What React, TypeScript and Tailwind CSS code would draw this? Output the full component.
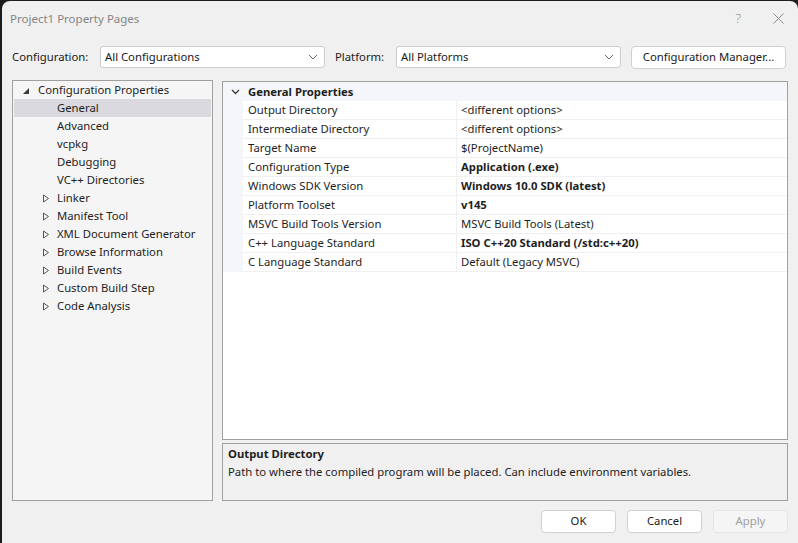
import React from 'react';

const font = { fontFamily: '"Noto Sans", "Open Sans", sans-serif' };

interface TreeItem {
  label: string;
  level: 0 | 1;
  expander?: 'open' | 'closed';
  selected?: boolean;
}

const treeItems: TreeItem[] = [
  { label: 'Configuration Properties', level: 0, expander: 'open' },
  { label: 'General', level: 1, selected: true },
  { label: 'Advanced', level: 1 },
  { label: 'vcpkg', level: 1 },
  { label: 'Debugging', level: 1 },
  { label: 'VC++ Directories', level: 1 },
  { label: 'Linker', level: 1, expander: 'closed' },
  { label: 'Manifest Tool', level: 1, expander: 'closed' },
  { label: 'XML Document Generator', level: 1, expander: 'closed' },
  { label: 'Browse Information', level: 1, expander: 'closed' },
  { label: 'Build Events', level: 1, expander: 'closed' },
  { label: 'Custom Build Step', level: 1, expander: 'closed' },
  { label: 'Code Analysis', level: 1, expander: 'closed' }
];

const properties = [
  { name: 'Output Directory', value: '<different options>', bold: false },
  { name: 'Intermediate Directory', value: '<different options>', bold: false },
  { name: 'Target Name', value: '$(ProjectName)', bold: false },
  { name: 'Configuration Type', value: 'Application (.exe)', bold: true },
  { name: 'Windows SDK Version', value: 'Windows 10.0 SDK (latest)', bold: true },
  { name: 'Platform Toolset', value: 'v145', bold: true },
  { name: 'MSVC Build Tools Version', value: 'MSVC Build Tools (Latest)', bold: false },
  { name: 'C++ Language Standard', value: 'ISO C++20 Standard (/std:c++20)', bold: true },
  { name: 'C Language Standard', value: 'Default (Legacy MSVC)', bold: false }
];

const ComboChevron = () => (
  <svg width="10" height="6" viewBox="0 0 10 6" className="shrink-0">
    <path d="M1 1 L5 5 L9 1" fill="none" stroke="#6a6a6a" strokeWidth="1" />
  </svg>
);

const Combo: React.FC<{ value: string; width: string }> = ({ value, width }) => (
  <div
    className={`${width} h-[22px] bg-white border border-[#cccccc] rounded-[3px] flex items-center justify-between pl-[4px] pr-[6px] text-[#1a1a1a]`}
  >
    <span>{value}</span>
    <ComboChevron />
  </div>
);

const Expander: React.FC<{ kind: 'open' | 'closed' }> = ({ kind }) =>
  kind === 'open' ? (
    <svg width="8" height="8" viewBox="0 0 8 8">
      <path d="M7 1 L7 7 L1 7 Z" fill="#3c3c3c" />
    </svg>
  ) : (
    <svg width="8" height="9" viewBox="0 0 8 9">
      <path d="M1.5 1 L6.5 4.5 L1.5 8 Z" fill="none" stroke="#555555" strokeWidth="1" />
    </svg>
  );

const DialogButton: React.FC<{ label: string; disabled?: boolean }> = ({ label, disabled }) => (
  <div
    className={`w-[75px] h-[23px] rounded-[4px] border flex items-center justify-center ${
      disabled
        ? 'bg-[#f5f5f5] border-[#e5e5e5] text-[#a0a0a0]'
        : 'bg-white border-[#d0d0d0] text-[#1a1a1a]'
    }`}
  >
    {label}
  </div>
);

export default function App() {
  return (
    <div className="w-[798px] h-[543px] bg-[#1c1c1c] overflow-hidden pl-[2px] pt-[1px] text-[11.3px]" style={font}>
      <div className="h-full bg-[#f0f0f0] rounded-t-[8px] flex flex-col">
        {/* Title bar */}
        <div className="h-[35px] shrink-0 flex items-center pl-[8px] pr-[14px]">
          <span className="text-[11.5px] text-[#858585]">Project1 Property Pages</span>
          <div className="ml-auto flex items-center gap-[32px] text-[#8a8a8a]">
            <span className="text-[13px] font-light">?</span>
            <svg width="11" height="11" viewBox="0 0 11 11">
              <path d="M0.5 0.5 L10.5 10.5 M10.5 0.5 L0.5 10.5" stroke="#8a8a8a" strokeWidth="1" />
            </svg>
          </div>
        </div>

        {/* Configuration row */}
        <div className="mt-[10px] h-[22px] shrink-0 flex items-center pl-[10px] text-[#1a1a1a]">
          <span className="w-[88px]">Configuration:</span>
          <Combo value="All Configurations" width="w-[225px]" />
          <span className="ml-[10px] w-[61px]">Platform:</span>
          <Combo value="All Platforms" width="w-[225px]" />
          <div className="ml-[10px] w-[155px] h-[23px] bg-white border border-[#d0d0d0] rounded-[4px] flex items-center justify-center">
            Configuration Manager...
          </div>
        </div>

        {/* Main area */}
        <div className="mt-[12px] h-[421px] shrink-0 flex pl-[10px] gap-[9px]">
          {/* Tree */}
          <div className="w-[201px] h-full bg-[#f5f5f5] border border-[#a0a0a0] pl-[1px] pr-[1px] text-[#1e1e1e]">
            {treeItems.map((item) => (
              <div
                key={item.label}
                className={`h-[18px] flex items-center pt-[1px] ${item.selected ? 'bg-[#d9d9df]' : ''}`}
              >
                <div className={`${item.level === 0 ? 'w-[24px] pl-[8px]' : 'w-[43px] pl-[28px]'} flex items-center`}>
                  {item.expander && <Expander kind={item.expander} />}
                </div>
                <span>{item.label}</span>
              </div>
            ))}
          </div>

          {/* Right column */}
          <div className="w-[566px] h-full flex flex-col">
            {/* Property grid */}
            <div className="mt-[1px] h-[359px] bg-white border border-[#a0a0a0] text-[#1e1e1e]">
              <div className="h-[19px] bg-[#f4f6f9] flex items-center pt-[1px]">
                <div className="w-[25px] flex items-center justify-center">
                  <svg width="9" height="6" viewBox="0 0 9 6">
                    <path d="M1 1 L4.5 4.5 L8 1" fill="none" stroke="#3a3a3a" strokeWidth="1.3" />
                  </svg>
                </div>
                <span className="font-bold">General Properties</span>
              </div>
              <div className="flex">
                <div className="w-[20px] bg-[#f4f6f9]" />
                <div className="flex-1">
                  {properties.map((p) => (
                    <div key={p.name} className="h-[19px] flex border-b border-[#f0f0f0]">
                      <div className="w-[214px] flex items-center pl-[5px] pt-[1px] border-r border-[#f0f0f0]">
                        {p.name}
                      </div>
                      <div className={`flex-1 flex items-center pl-[4px] pt-[1px] ${p.bold ? 'font-bold' : ''}`}>
                        {p.value}
                      </div>
                    </div>
                  ))}
                </div>
              </div>
            </div>

            {/* Description */}
            <div className="mt-[3px] h-[58px] bg-[#f0f0f0] border border-[#a0a0a0] pl-[5px] pt-[1px] text-[#1e1e1e]">
              <div className="font-bold leading-[18px]">Output Directory</div>
              <div className="leading-[17px]">
                Path to where the compiled program will be placed. Can include environment variables.
              </div>
            </div>
          </div>
        </div>

        {/* Buttons */}
        <div className="mt-[9px] flex justify-end gap-[11px] pr-[10px]">
          <DialogButton label="OK" />
          <DialogButton label="Cancel" />
          <DialogButton label="Apply" disabled />
        </div>
      </div>
    </div>
  );
}
